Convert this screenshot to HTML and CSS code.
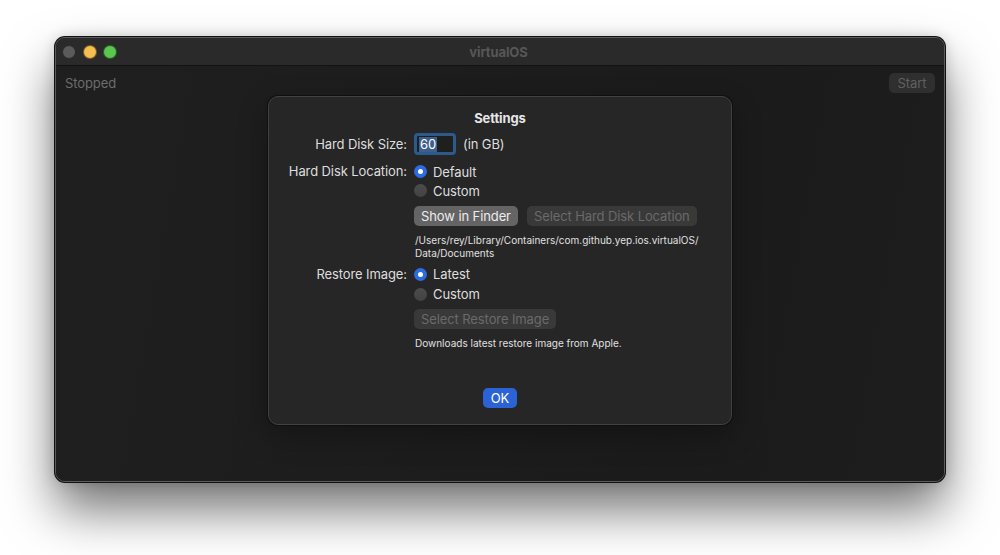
FILE: index.html
```html
<!DOCTYPE html>
<html lang="en">
<head>
    <meta charset="UTF-8">
    <title>virtualOS</title>
    <link rel="stylesheet" href="styles.css">
</head>
<body>
    <div id="window">
        <div class="titlebar">
            <div class="lights">
                <span class="light gray"></span>
                <span class="light yellow"></span>
                <span class="light green"></span>
            </div>
            <div class="title">virtualOS</div>
        </div>
        <div class="content">
            <div class="toolbar">
                <span class="status">Stopped</span>
                <button class="btn startButton">Start</button>
            </div>
            <div id="settingsSheet">
                <h1>Settings</h1>
                <div class="row sizeRow">
                    <label class="label">Hard Disk Size:</label>
                    <div class="control inline">
                        <div class="textField"><span class="selection">60</span></div>
                        <span>(in GB)</span>
                    </div>
                </div>
                <div class="row locationRow">
                    <label class="label">Hard Disk Location:</label>
                    <div class="control">
                        <div class="radio checked"><span class="dot"></span>Default</div>
                        <div class="radio"><span class="dot"></span>Custom</div>
                        <div class="buttons">
                            <button class="btn pushButton">Show in Finder</button>
                            <button class="btn pushButton disabled">Select Hard Disk Location</button>
                        </div>
                        <p class="note path">/Users/rey/Library/Containers/com.github.yep.ios.virtualOS/<br>Data/Documents</p>
                    </div>
                </div>
                <div class="row restoreRow">
                    <label class="label">Restore Image:</label>
                    <div class="control">
                        <div class="radio checked"><span class="dot"></span>Latest</div>
                        <div class="radio"><span class="dot"></span>Custom</div>
                        <div class="buttons">
                            <button class="btn pushButton disabled">Select Restore Image</button>
                        </div>
                        <p class="note">Downloads latest restore image from Apple.</p>
                    </div>
                </div>
                <div class="footer">
                    <button class="btn okButton">OK</button>
                </div>
            </div>
        </div>
    </div>
</body>
</html>
```

FILE: styles.css
```css
html {
    height: 100%;
    background-color: #fff;
}
body {
    margin: 0;
    padding: 37px 55px 0 55px;
    min-height: 100%;
    box-sizing: border-box;
    background-color: #fff;
    font-family: Inter, "Liberation Sans", sans-serif;
    font-size: 13px;
    letter-spacing: -0.1px;
    color: #dedede;
}
#window {
    width: 888px;
    height: 443px;
    background-color: #1e1e1e;
    border: 1px solid #5c5c5c;
    border-radius: 10px;
    box-shadow: 0 0 0 1px #111, 0 28px 50px rgba(0, 0, 0, 0.55), 0 0 14px rgba(0, 0, 0, 0.18);
    overflow: hidden;
}
.titlebar {
    height: 27px;
    background-color: #2a2a2a;
    border-bottom: 1px solid #121212;
    display: flex;
    align-items: center;
}
.lights {
    display: flex;
    gap: 6.5px;
    padding-left: 6px;
}
.light {
    width: 12px;
    height: 12px;
    border-radius: 50%;
    border: 0.5px solid rgba(0, 0, 0, 0.5);
}
.gray { background-color: #5b5b5b; }
.yellow { background-color: #f6be4f; }
.green { background-color: #5ac84f; }
.title {
    flex: 1;
    text-align: center;
    font-weight: 700;
    color: #575757;
    margin-right: 64px;
}
.content {
    padding: 6px 10px 0 10px;
    background: linear-gradient(100deg, #1f1f1f, #1b1b1b 70%, #1d1d1d);
    height: 100%;
}
.toolbar {
    display: flex;
    justify-content: space-between;
    align-items: center;
    height: 22px;
}
.status {
    color: #6c6c6c;
    margin-left: -1px;
}
.btn {
    font-family: inherit;
    font-size: 13px;
    letter-spacing: -0.1px;
    border: none;
    border-radius: 5px;
    height: 20px;
    padding: 0 7px;
    color: #e8e8e8;
}
.startButton {
    background-color: #2f2f2f;
    color: #606060;
    width: 46px;
    margin-right: -1px;
}
#settingsSheet {
    width: 464px;
    height: 329px;
    margin: 2px auto 0 auto;
    background-color: #262626;
    border: 1px solid #424242;
    border-radius: 10px;
    box-shadow: 0 0 0 1px #0f0f0f, 0 10px 30px rgba(0, 0, 0, 0.3);
    padding-top: 13px;
    box-sizing: border-box;
    display: flex;
    flex-direction: column;
}
h1 {
    margin: 0;
    font-size: 13px;
    line-height: 16px;
    font-weight: 700;
    text-align: center;
    color: #e6e6e6;
}
.row {
    display: flex;
    gap: 7px;
}
.label {
    width: 138px;
    text-align: right;
    line-height: 19px;
}
.sizeRow {
    margin-top: 7px;
    align-items: center;
}
.inline {
    display: flex;
    align-items: center;
    gap: 7px;
}
.textField {
    width: 34px;
    height: 16px;
    border: 3px solid #2c5a8a;
    border-radius: 4px;
    background-color: #1f1f1f;
    display: flex;
    align-items: center;
    padding-left: 2px;
}
.selection {
    background-color: #3c5f8e;
    color: #fff;
    line-height: 15px;
    padding: 0 1px;
}
.locationRow {
    margin-top: 7px;
}
.restoreRow {
    margin-top: 4px;
}
.radio {
    display: flex;
    align-items: center;
    gap: 6px;
    height: 19px;
}
.restoreRow .radio {
    height: 20px;
}
.restoreRow .label {
    line-height: 20px;
}
.dot {
    width: 13px;
    height: 13px;
    border-radius: 50%;
    background: linear-gradient(#4c4c4c, #424242);
    position: relative;
}
.checked .dot {
    background: #2d6be0;
}
.checked .dot::after {
    content: "";
    position: absolute;
    width: 5px;
    height: 5px;
    border-radius: 50%;
    background-color: #fff;
    left: 4px;
    top: 4px;
}
.buttons {
    display: flex;
    gap: 9px;
    margin-top: 6px;
}
.restoreRow .buttons {
    margin-top: 5px;
}
.pushButton {
    background-color: #646464;
    color: #ececec;
}
.pushButton.disabled {
    background-color: #393939;
    color: #6a6a6a;
}
.note {
    margin: 8px 0 0 1px;
    font-size: 10px;
    line-height: 13px;
    letter-spacing: 0;
    color: #e0e0e0;
}
.restoreRow .note {
    margin-top: 8px;
}
.footer {
    display: flex;
    justify-content: center;
    margin-top: 38px;
}
.okButton {
    background-color: #2b62d6;
    color: #fff;
    width: 34px;
    padding: 0;
}
```
